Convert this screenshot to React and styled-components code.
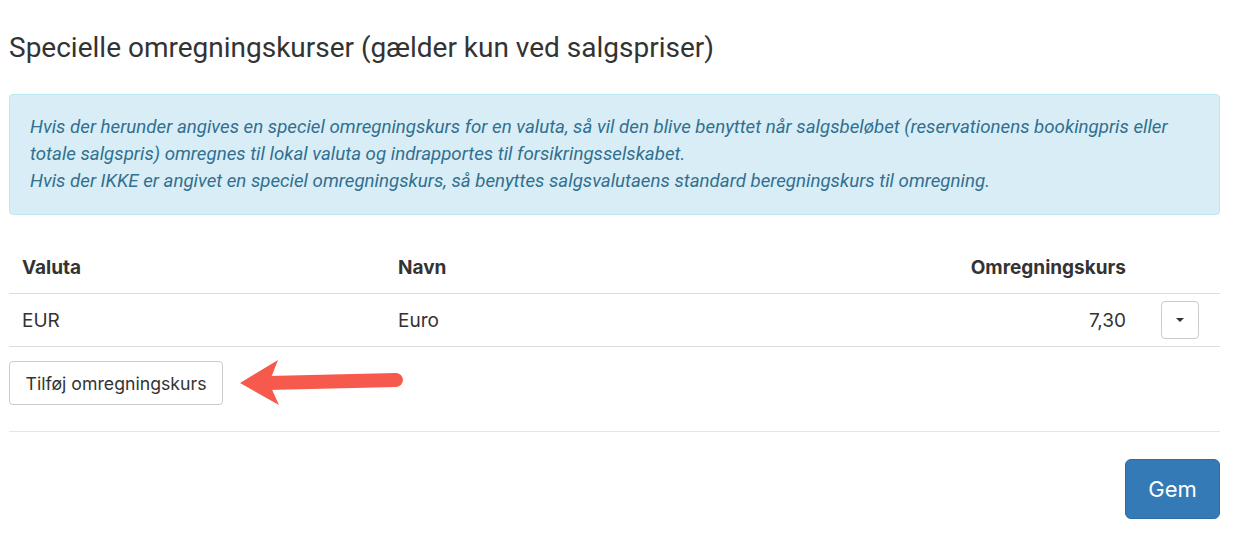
import React from 'react'
import styled, { createGlobalStyle } from 'styled-components'

const GlobalStyle = createGlobalStyle`
    html, body {
        margin: 0;
        padding: 0;
        background: #fff;
    }
    body {
        font-family: Inter, "Helvetica Neue", Arial, sans-serif;
        color: #333;
    }
`

const rates = [
    { code: 'EUR', name: 'Euro', rate: '7,30' },
]

function App() {
  return (
      <Page>
          <GlobalStyle />
          <Title>Specielle omregningskurser (gælder kun ved salgspriser)</Title>
          <InfoBox>
              Hvis der herunder angives en speciel omregningskurs for en valuta, så vil den blive benyttet når salgsbeløbet (reservationens bookingpris eller totale salgspris) omregnes til lokal valuta og indrapportes til forsikringsselskabet.
              <br />
              Hvis der IKKE er angivet en speciel omregningskurs, så benyttes salgsvalutaens standard beregningskurs til omregning.
          </InfoBox>
          <Table>
              <colgroup>
                  <col style={{ width: 376 }} />
                  <col />
                  <col style={{ width: 300 }} />
                  <col style={{ width: 81 }} />
              </colgroup>
              <thead>
                  <tr>
                      <Th>Valuta</Th>
                      <Th>Navn</Th>
                      <Th right>Omregningskurs</Th>
                      <Th />
                  </tr>
              </thead>
              <tbody>
                  {rates.map(r => (
                      <tr key={r.code}>
                          <Td>{r.code}</Td>
                          <Td>{r.name}</Td>
                          <Td right>{r.rate}</Td>
                          <Td center>
                              <CaretButton>
                                  <Caret />
                              </CaretButton>
                          </Td>
                      </tr>
                  ))}
              </tbody>
          </Table>
          <AddRow>
              <DefaultButton>Tilføj omregningskurs</DefaultButton>
              {/* annotation arrow pointing at the button */}
              <Arrow viewBox="0 0 170 55" width="170" height="55">
                  <path d="M158 25 L30 28" stroke="#f65a4c" strokeWidth="14" strokeLinecap="round" fill="none" />
                  <path d="M2 28 L40 5 L31 28 L41 50 Z" fill="#f65a4c" />
              </Arrow>
          </AddRow>
          <Footer>
              <PrimaryButton>Gem</PrimaryButton>
          </Footer>
      </Page>
  )
}

const Page = styled.div`
    padding: 33px 20px 0 9px;
`
const Title = styled.h1`
    margin: 0;
    font-family: Roboto, Arial, sans-serif;
    font-size: 28px;
    font-weight: 400;
    line-height: 29px;
    color: #333;
`
const InfoBox = styled.div`
    margin-top: 32px;
    padding: 19px 20px;
    background-color: #d9edf7;
    border: 1px solid #bce8f1;
    border-radius: 4px;
    color: #31708f;
    font-family: Roboto, Arial, sans-serif;
    font-style: italic;
    font-size: 18.7px;
    line-height: 27px;
`
const Table = styled.table`
    width: 100%;
    margin-top: 27px;
    border-collapse: collapse;
    table-layout: fixed;
    font-size: 19px;
`
const Th = styled.th`
    height: 51px;
    padding: 0 13px;
    text-align: ${props => props.right ? 'right' : 'left'};
    font-weight: 700;
    border-bottom: 1px solid #ddd;
    vertical-align: middle;
`
const Td = styled.td`
    height: 52px;
    padding: 0 13px;
    text-align: ${props => props.right ? 'right' : props.center ? 'center' : 'left'};
    border-bottom: 1px solid #ddd;
    vertical-align: middle;
`
const CaretButton = styled.button`
    width: 38px;
    height: 38px;
    padding: 0;
    display: inline-flex;
    justify-content: center;
    align-items: center;
    background: #fff;
    border: 1px solid #ccc;
    border-radius: 4px;
    cursor: pointer;
`
const Caret = styled.span`
    width: 0;
    height: 0;
    border-top: 4px solid #333;
    border-left: 4px solid transparent;
    border-right: 4px solid transparent;
`
const AddRow = styled.div`
    position: relative;
    padding: 14px 0 26px;
    border-bottom: 1px solid #e5e5e5;
`
const DefaultButton = styled.button`
    height: 44px;
    width: 214px;
    padding: 0 10px;
    background: #fff;
    border: 1px solid #ccc;
    border-radius: 4px;
    font-family: Inter, Arial, sans-serif;
    font-size: 17.7px;
    color: #333;
    cursor: pointer;
`
const Arrow = styled.svg`
    position: absolute;
    left: 229px;
    top: 8px;
`
const Footer = styled.div`
    display: flex;
    justify-content: flex-end;
    padding-top: 27px;
`
const PrimaryButton = styled.button`
    width: 95px;
    height: 60px;
    background-color: #337ab7;
    border: 1px solid #2e6da4;
    border-radius: 6px;
    color: #fff;
    font-family: Inter, Arial, sans-serif;
    font-size: 22px;
    cursor: pointer;
`

export default App
